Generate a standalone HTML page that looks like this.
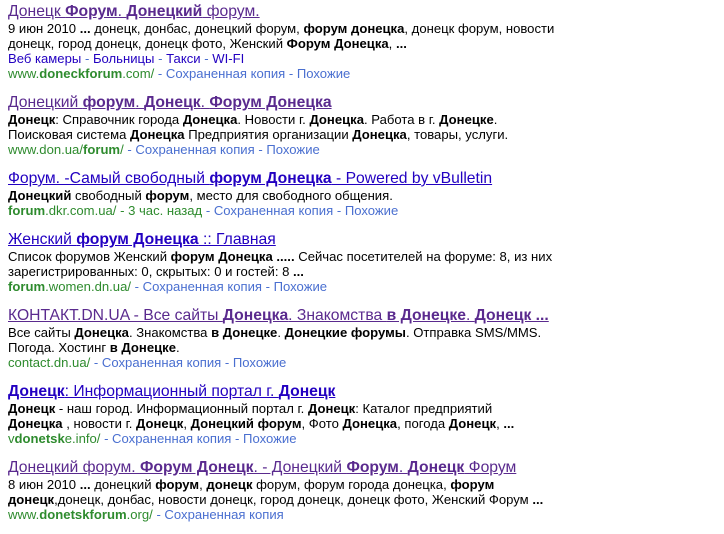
<!DOCTYPE html>
<html><head><meta charset="utf-8"><style>
body{margin:0;background:#fff;font-family:"Liberation Sans",Arial,sans-serif;}
.w{position:absolute;left:8px;top:2px;width:716px}
.r{margin-bottom:12px}
.t{font-size:15.7px;line-height:19px;text-decoration:underline;white-space:nowrap}
.v{color:#5a2a8e}.u{color:#2200c1}
.s{font-size:13.1px;line-height:15px;color:#000;}
.l{color:#2200c1}
.g{color:#2e8b2e}
.c{color:#4a6fd0}
.s b{font-weight:bold}
</style></head><body><div class="w">
<div class="r"><div class="t v">Донецк <b>Форум</b>. <b>Донецкий</b> форум.</div>
<div class="s">9 июн 2010 <b>...</b> донецк, донбас, донецкий форум, <b>форум донецка</b>, донецк форум, новости<br>донецк, город донецк, донецк фото, Женский <b>Форум Донецка</b>, <b>...</b><br><span class="l">Веб камеры</span> <span class="c">-</span> <span class="l">Больницы</span> <span class="c">-</span> <span class="l">Такси</span> <span class="c">-</span> <span class="l">WI-FI</span><br><span class="g">www.<b>doneckforum</b>.com/</span> <span class="c">- Сохраненная копия - Похожие</span></div></div>
<div class="r"><div class="t v">Донецкий <b>форум</b>. <b>Донецк</b>. <b>Форум Донецка</b></div>
<div class="s"><b>Донецк</b>: Справочник города <b>Донецка</b>. Новости г. <b>Донецка</b>. Работа в г. <b>Донецке</b>.<br>Поисковая система <b>Донецка</b> Предприятия организации <b>Донецка</b>, товары, услуги.<br><span class="g">www.don.ua/<b>forum</b>/</span> <span class="c">- Сохраненная копия - Похожие</span></div></div>
<div class="r"><div class="t u">Форум. -Самый свободный <b>форум Донецка</b> - Powered by vBulletin</div>
<div class="s"><b>Донецкий</b> свободный <b>форум</b>, место для свободного общения.<br><span class="g"><b>forum</b>.dkr.com.ua/ - 3 час. назад</span> <span class="c">- Сохраненная копия - Похожие</span></div></div>
<div class="r"><div class="t u">Женский <b>форум Донецка</b> :: Главная</div>
<div class="s">Список форумов Женский <b>форум Донецка .....</b> Сейчас посетителей на форуме: 8, из них<br>зарегистрированных: 0, скрытых: 0 и гостей: 8 <b>...</b><br><span class="g"><b>forum</b>.women.dn.ua/</span> <span class="c">- Сохраненная копия - Похожие</span></div></div>
<div class="r"><div class="t v">КОНТАКТ.DN.UA - Все сайты <b>Донецка</b>. Знакомства <b>в Донецке</b>. <b>Донецк ...</b></div>
<div class="s">Все сайты <b>Донецка</b>. Знакомства <b>в Донецке</b>. <b>Донецкие форумы</b>. Отправка SMS/MMS.<br>Погода. Хостинг <b>в Донецке</b>.<br><span class="g">contact.dn.ua/</span> <span class="c">- Сохраненная копия - Похожие</span></div></div>
<div class="r"><div class="t u"><b>Донецк</b>: Информационный портал г. <b>Донецк</b></div>
<div class="s"><b>Донецк</b> - наш город. Информационный портал г. <b>Донецк</b>: Каталог предприятий<br><b>Донецка</b> , новости г. <b>Донецк</b>, <b>Донецкий форум</b>, Фото <b>Донецка</b>, погода <b>Донецк</b>, <b>...</b><br><span class="g">v<b>donetsk</b>e.info/</span> <span class="c">- Сохраненная копия - Похожие</span></div></div>
<div class="r"><div class="t v">Донецкий форум. <b>Форум Донецк</b>. - Донецкий <b>Форум</b>. <b>Донецк</b> Форум</div>
<div class="s">8 июн 2010 <b>...</b> донецкий <b>форум</b>, <b>донецк</b> форум, форум города донецка, <b>форум</b><br><b>донецк</b>,донецк, донбас, новости донецк, город донецк, донецк фото, Женский Форум <b>...</b><br><span class="g">www.<b>donetskforum</b>.org/</span> <span class="c">- Сохраненная копия</span></div></div>
</div></body></html>
